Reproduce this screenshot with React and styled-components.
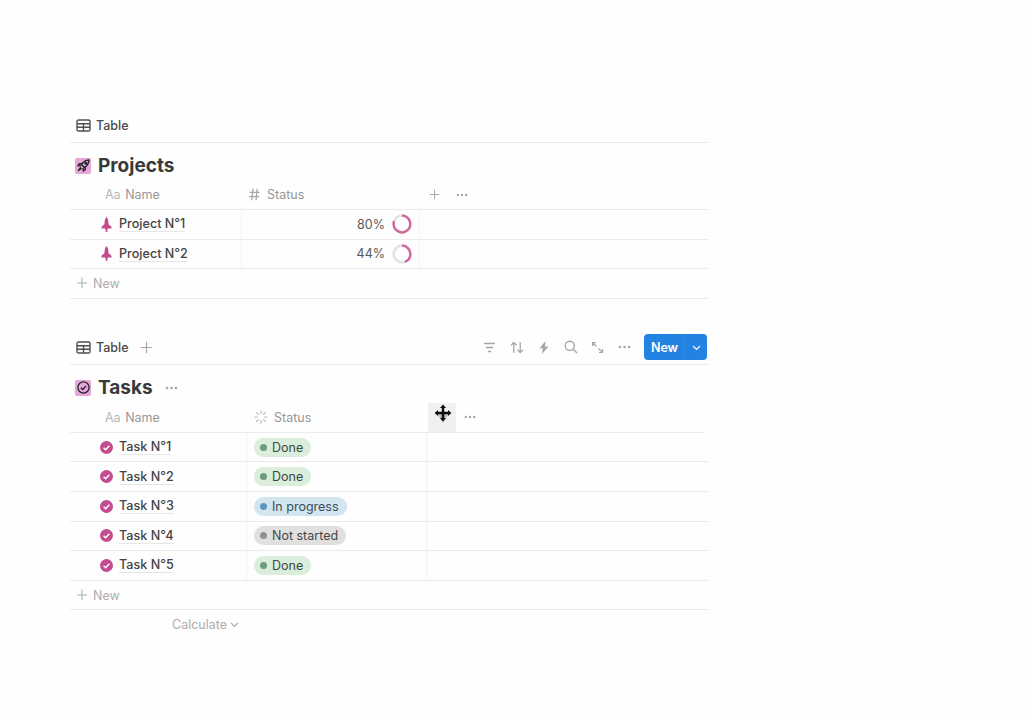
import React from "react";
import styled, { createGlobalStyle } from "styled-components";

const Global = createGlobalStyle`
  html, body { margin: 0; padding: 0; background: #fefefe; }
  body { font-family: Inter, "Liberation Sans", sans-serif; color: #37352f; -webkit-font-smoothing: antialiased; }
`;

const Page = styled.div`
  width: 708px;
  min-height: 720px;
  box-sizing: border-box;
  padding: 108px 0 0 70px;
  display: flex;
  flex-direction: column;
  gap: 31px;
`;
const Block = styled.section`
  display: flex;
  flex-direction: column;
`;
const TabBar = styled.div`
  height: 35px;
  box-sizing: border-box;
  border-bottom: 1px solid #ebebeb;
  display: flex;
  align-items: center;
  padding: 0.5px 1px 0 6px;
`;
const Tab = styled.div`
  display: flex;
  align-items: center;
  gap: 5px;
  font-size: 12.5px;
  font-weight: 500;
  color: #4a4a4a;
`;
const AddView = styled.span`
  display: flex;
  margin-left: 11px;
  color: #a6a6a6;
`;
const Tools = styled.div`
  margin-left: auto;
  display: flex;
  align-items: center;
`;
const Tool = styled.span`
  width: 27px;
  height: 20px;
  display: flex;
  align-items: center;
  justify-content: center;
  color: #a6a6a6;
`;
const NewButton = styled.div`
  margin-left: 6px;
  width: 63px;
  height: 26px;
  border-radius: 4px;
  background: #2383e2;
  color: #fff;
  display: flex;
  align-items: center;
  font-size: 12.5px;
  font-weight: 600;
`;
const NewLabel = styled.span`
  flex: 1;
  text-align: center;
  padding-left: 1px;
`;
const NewArrow = styled.span`
  width: 22px;
  height: 100%;
  display: flex;
  align-items: center;
  justify-content: center;
  border-left: 1px solid rgba(255, 255, 255, 0.06);
`;
const TitleRow = styled.div`
  height: ${(p) => p.$h}px;
  box-sizing: border-box;
  padding: 8px 0 0 5px;
  display: flex;
  align-items: center;
  gap: 7px;
`;
const Badge = styled.span`
  width: 16px;
  height: 16px;
  border-radius: 2px;
  background: #e6a6d8;
  display: flex;
  align-items: center;
  justify-content: center;
  color: #232323;
`;
const TitleText = styled.h2`
  margin: 0;
  font-size: 19px;
  line-height: 26px;
  font-weight: 700;
  color: #393939;
`;
const TitleDots = styled.span`
  display: flex;
  margin-left: 5px;
  color: #a6a6a6;
`;
const HeadRow = styled.div`
  height: ${(p) => p.$h}px;
  box-sizing: border-box;
  border-bottom: 1px solid #ebebeb;
  display: flex;
  align-items: stretch;
  width: ${(p) => p.$w || "100%"};
`;
const RowLine = styled.div`
  height: 29.6px;
  box-sizing: border-box;
  border-bottom: 1px solid #ebebeb;
  display: flex;
  align-items: stretch;
`;
const NameHead = styled.div`
  width: ${(p) => p.$w}px;
  padding-left: 35px;
  box-sizing: border-box;
  display: flex;
  align-items: center;
  gap: 4.5px;
  font-size: 12.5px;
  color: #969696;
`;
const Aa = styled.span`
  color: #b8b8b8;
  font-size: 12.5px;
`;
const ColHead = styled.div`
  width: ${(p) => p.$w}px;
  box-sizing: border-box;
  padding-left: 7px;
  display: flex;
  align-items: center;
  gap: ${(p) => p.$gap}px;
  font-size: 12.5px;
  color: #969696;
`;
const HeadAction = styled.span`
  width: 28px;
  display: flex;
  align-items: center;
  justify-content: center;
  color: #a6a6a6;
`;
const MovedCell = styled.div`
  width: 28px;
  margin-left: 1px;
  background: #f0f0f0;
  display: flex;
  align-items: flex-start;
  justify-content: center;
  padding: 1px 0 0 2px;
  box-sizing: border-box;
`;
const NameCell = styled.div`
  width: ${(p) => p.$w}px;
  box-sizing: border-box;
  padding-left: 30px;
  display: flex;
  align-items: center;
  gap: 6px;
  border-right: 1px solid #f3f3f3;
`;
const RowIcon = styled.span`
  display: flex;
  width: 13px;
  justify-content: center;
  color: #c34c8f;
`;
const RowName = styled.span`
  font-size: 12.6px;
  font-weight: 500;
  color: #444444;
  border-bottom: 1px solid #e6e6e6;
  line-height: 15px;
`;
const ProgressCell = styled.div`
  width: 178px;
  box-sizing: border-box;
  border-right: 1px solid #f3f3f3;
  display: flex;
  align-items: center;
  justify-content: flex-end;
  padding-right: 7px;
  gap: 7px;
  font-size: 12.5px;
  color: #595959;
`;
const StatusCell = styled.div`
  width: 180px;
  box-sizing: border-box;
  border-right: 1px solid #f3f3f3;
  padding-left: 7px;
  display: flex;
  align-items: center;
`;
const toneMap = {
  done: ["#dbeddb", "#6c9b7d", "#3a4a40"],
  progress: ["#d3e5ef", "#5b97bd", "#3a4e5a"],
  todo: ["#e0e0e0", "#919191", "#454545"],
};
const Pill = styled.span`
  height: 19px;
  border-radius: 10px;
  padding: 0 8px 0 6px;
  display: inline-flex;
  align-items: center;
  gap: 5px;
  font-size: 12.5px;
  background: ${(p) => toneMap[p.$tone][0]};
  color: ${(p) => toneMap[p.$tone][2]};
`;
const Dot = styled.i`
  width: 7px;
  height: 7px;
  border-radius: 50%;
  background: ${(p) => toneMap[p.$tone][1]};
`;
const AddRow = styled(RowLine)`
  align-items: center;
  padding-left: 6px;
  gap: 5px;
  font-size: 12.5px;
  color: #adadad;
`;
const CalcRow = styled.div`
  height: 28px;
  padding-left: 102px;
  display: flex;
  align-items: center;
  gap: 3px;
  font-size: 12.5px;
  color: #adadad;
`;

const TableIcon = () => (
  <svg width="15" height="13" viewBox="0 0 15 13" fill="none" stroke="#4f4f4f" strokeWidth="1.4">
    <rect x="1" y="1" width="13" height="11" rx="1.6" />
    <path d="M1 4.700h13M1 8.300h13M7.500 4.700V12" />
  </svg>
);
const Plus = ({ s = 12 }) => (
  <svg width={s} height={s} viewBox="0 0 12 12" stroke="currentColor" strokeWidth="1.1" fill="none">
    <path d="M6 .8v10.400M.8 6h10.400" />
  </svg>
);
const Dots = ({ w = 13 }) => (
  <svg width={w} height="4" viewBox="0 0 13 4" fill="currentColor">
    <circle cx="2" cy="2" r="1.3" />
    <circle cx="6.500" cy="2" r="1.3" />
    <circle cx="11" cy="2" r="1.3" />
  </svg>
);
const Rocket = () => (
  <svg width="13" height="13" viewBox="0 0 13 13" fill="none" stroke="currentColor" strokeWidth="1.4" strokeLinejoin="round">
    <path d="M12 1c-3.600.2-5.800 1.700-7.600 4.600L7.400 8.600C10.300 6.800 11.800 4.600 12 1Z" />
    <circle cx="8.800" cy="4.200" r=".8" fill="currentColor" />
    <path d="M4.900 4.800H2.400L1 6.600l3 .4M8.200 8.100v2.500L6.400 12 6 9M3.800 8.400 1.500 11.500l3.100-2.300" />
  </svg>
);
const Check = () => (
  <svg width="13" height="13" viewBox="0 0 13 13" fill="none" stroke="currentColor" strokeWidth="1.3">
    <circle cx="6.500" cy="6.500" r="5.600" />
    <path d="M3.900 6.700l1.900 1.800 3.300-3.600" />
  </svg>
);
const Pin = () => (
  <svg width="11" height="15" viewBox="0 0 11 15" fill="currentColor">
    <path d="M5.500 0C6.800 1.400 7.400 3.600 7.500 6L7.600 7.200 10.500 9.800V11.500H7L6.300 13V15H4.700V13L4 11.500H.5V9.800L3.400 7.200 3.500 6C3.600 3.600 4.200 1.400 5.500 0Z" />
  </svg>
);
const DoneMark = () => (
  <svg width="13" height="13" viewBox="0 0 13 13">
    <circle cx="6.500" cy="6.500" r="6.500" fill="currentColor" />
    <path d="M3.600 6.800l2 1.900 3.800-4" fill="none" stroke="#fff" strokeWidth="1.5" />
  </svg>
);
const Ring = ({ pct }) => {
  const c = 2 * Math.PI * 8.4;
  return (
    <svg width="20" height="20" viewBox="0 0 20 20" fill="none" strokeWidth="2.5">
      <circle cx="10" cy="10" r="8.400" stroke="#e2e2e2" />
      <circle
        cx="10"
        cy="10"
        r="8.400"
        stroke="#cf6a9f"
        strokeDasharray={`${(c * pct) / 100} ${c}`}
        transform="rotate(-90 10 10)"
      />
    </svg>
  );
};
const Hash = () => (
  <svg width="11" height="13" viewBox="0 0 11 13" stroke="#a6a6a6" strokeWidth="1.3" fill="none">
    <path d="M4 .8 2.800 12.200M8.200.8 7 12.200M.6 4.400h10M.2 8.600h10" />
  </svg>
);
const Spinner = () => (
  <svg width="14" height="14" viewBox="0 0 14 14" stroke="#b8b8b8" strokeWidth="1.2" strokeLinecap="round" fill="none">
    <path d="M7 .8v2.600M7 10.600v2.600M.8 7h2.600M10.600 7h2.600M2.600 2.600l1.800 1.800M9.600 9.600l1.800 1.800M2.600 11.400l1.800-1.800M9.600 4.400l1.800-1.800" />
  </svg>
);
const MoveCursor = () => (
  <svg width="18" height="20" viewBox="0 0 18 20">
    <path d="M9 6 14 11 9 19 4 11Z" fill="#8f8f8f" opacity=".55" />
    <path
      d="M9 .6 12 4H10.200V7.800H14V6L17.400 9 14 12V10.200H10.200V14H12L9 17.400 6 14H7.800V10.200H4V12L.6 9 4 6V7.800H7.800V4H6Z"
      fill="#0c0c0c"
    />
  </svg>
);
const FilterIcon = () => (
  <svg width="13" height="11" viewBox="0 0 13 11" stroke="currentColor" strokeWidth="1.300" fill="none">
    <path d="M1 1.500h11M3 5.500h7M5 9.500h3" />
  </svg>
);
const SortIcon = () => (
  <svg width="14" height="13" viewBox="0 0 14 13" stroke="currentColor" strokeWidth="1.300" fill="none">
    <path d="M3.800 12V1.500M1 4.300l2.800-2.900 2.800 2.900M10.200 1v10.500M7.400 8.700l2.800 2.900 2.800-2.900" />
  </svg>
);
const BoltIcon = () => (
  <svg width="10" height="13" viewBox="0 0 10 13" fill="currentColor">
    <path d="M6.500 0 .5 7.300h3.300L3 13l6.500-7.600H5.900Z" />
  </svg>
);
const SearchIcon = () => (
  <svg width="14" height="14" viewBox="0 0 14 14" stroke="currentColor" strokeWidth="1.400" fill="none">
    <circle cx="5.800" cy="5.800" r="4.600" />
    <path d="M9.200 9.200 13 13" />
  </svg>
);
const ExpandIcon = () => (
  <svg width="13" height="13" viewBox="0 0 13 13" stroke="currentColor" strokeWidth="1.200" fill="none">
    <path d="M1.500 5V1.500H5M1.500 1.500 5.500 5.500M11.500 8v3.500H8M11.500 11.500 7.500 7.500" />
  </svg>
);
const Chevron = ({ color = "currentColor", s = 9 }) => (
  <svg width={s} height={s} viewBox="0 0 9 9" stroke={color} strokeWidth="1.200" fill="none">
    <path d="M1 3l3.500 3.400L8 3" />
  </svg>
);

const projects = [
  { name: "Project N°1", pct: 80 },
  { name: "Project N°2", pct: 44 },
];
const tasks = [
  { name: "Task N°1", status: "Done", tone: "done" },
  { name: "Task N°2", status: "Done", tone: "done" },
  { name: "Task N°3", status: "In progress", tone: "progress" },
  { name: "Task N°4", status: "Not started", tone: "todo" },
  { name: "Task N°5", status: "Done", tone: "done" },
];

export default function App() {
  return (
    <>
      <Global />
      <Page>
        <Block>
          <TabBar>
            <Tab>
              <TableIcon />
              Table
            </Tab>
          </TabBar>
          <TitleRow $h={37}>
            <Badge>
              <Rocket />
            </Badge>
            <TitleText>Projects</TitleText>
          </TitleRow>
          <HeadRow $h={30}>
            <NameHead $w={172}>
              <Aa>Aa</Aa>
              Name
            </NameHead>
            <ColHead $w={178} $gap={7}>
              <Hash />
              Status
            </ColHead>
            <HeadAction>
              <Plus s={11} />
            </HeadAction>
            <HeadAction>
              <Dots w={12} />
            </HeadAction>
          </HeadRow>
          {projects.map((p) => (
            <RowLine key={p.name}>
              <NameCell $w={172}>
                <RowIcon>
                  <Pin />
                </RowIcon>
                <RowName>{p.name}</RowName>
              </NameCell>
              <ProgressCell>
                {p.pct}%
                <Ring pct={p.pct} />
              </ProgressCell>
            </RowLine>
          ))}
          <AddRow>
            <Plus />
            New
          </AddRow>
        </Block>
        <Block>
          <TabBar>
            <Tab>
              <TableIcon />
              Table
            </Tab>
            <AddView>
              <Plus s={13} />
            </AddView>
            <Tools>
              <Tool>
                <FilterIcon />
              </Tool>
              <Tool>
                <SortIcon />
              </Tool>
              <Tool>
                <BoltIcon />
              </Tool>
              <Tool>
                <SearchIcon />
              </Tool>
              <Tool>
                <ExpandIcon />
              </Tool>
              <Tool>
                <Dots />
              </Tool>
              <NewButton>
                <NewLabel>New</NewLabel>
                <NewArrow>
                  <Chevron color="#fff" />
                </NewArrow>
              </NewButton>
            </Tools>
          </TabBar>
          <TitleRow $h={38}>
            <Badge>
              <Check />
            </Badge>
            <TitleText>Tasks</TitleText>
            <TitleDots>
              <Dots />
            </TitleDots>
          </TitleRow>
          <HeadRow $h={30} $w="634px">
            <NameHead $w={177}>
              <Aa>Aa</Aa>
              Name
            </NameHead>
            <ColHead $w={180} $gap={6}>
              <Spinner />
              Status
            </ColHead>
            <MovedCell>
              <MoveCursor />
            </MovedCell>
            <HeadAction>
              <Dots w={12} />
            </HeadAction>
          </HeadRow>
          {tasks.map((t) => (
            <RowLine key={t.name}>
              <NameCell $w={177}>
                <RowIcon>
                  <DoneMark />
                </RowIcon>
                <RowName>{t.name}</RowName>
              </NameCell>
              <StatusCell>
                <Pill $tone={t.tone}>
                  <Dot $tone={t.tone} />
                  {t.status}
                </Pill>
              </StatusCell>
            </RowLine>
          ))}
          <AddRow>
            <Plus />
            New
          </AddRow>
          <CalcRow>
            Calculate
            <Chevron color="#adadad" />
          </CalcRow>
        </Block>
      </Page>
    </>
  );
}
